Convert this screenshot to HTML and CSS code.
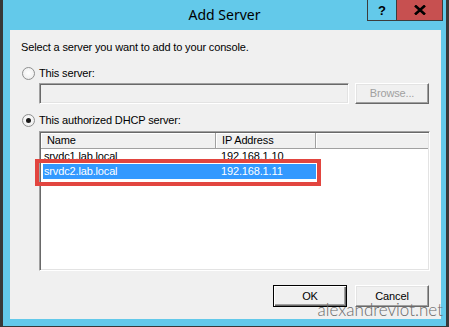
FILE: index.html
```html
<!DOCTYPE html>
<html>
<head>
<meta charset="utf-8">
<link rel="stylesheet" href="styles.css">
</head>
<body>
<div class="window">
  <div class="titlebar">
    <div class="title">Add Server</div>
    <div class="caption-buttons">
      <div class="cap-btn help">?</div>
      <div class="cap-btn close">
        <svg width="12" height="10" viewBox="0 0 12 10"><path d="M1 0.5 L11 9.5 M11 0.5 L1 9.5" stroke="#000" stroke-width="2.6" fill="none"/></svg>
      </div>
    </div>
  </div>
  <div class="client">
    <div class="intro">Select a server you want to add to your console.</div>
    <div class="radio-row r1"><span class="radio"></span><span class="label">This server:</span></div>
    <div class="server-row">
      <div class="textbox"></div>
      <div class="btn disabled browse">Browse...</div>
    </div>
    <div class="radio-row r2"><span class="radio checked"></span><span class="label">This authorized DHCP server:</span></div>
    <div class="list-wrap">
      <div class="list">
        <div class="header">
          <div class="col c-name">Name</div>
          <div class="col c-ip">IP Address</div>
          <div class="col c-rest"></div>
        </div>
        <div class="row"><div class="cell c-name">srvdc1.lab.local</div><div class="cell c-ip">192.168.1.10</div></div>
        <div class="row selected"><div class="cell c-name">srvdc2.lab.local</div><div class="cell c-ip">192.168.1.11</div></div>
      </div>
      <div class="highlight-box"></div>
    </div>
    <div class="actions">
      <div class="btn default">OK</div>
      <div class="btn">Cancel</div>
    </div>
  </div>
  <div class="watermark">alexandreviot.net</div>
</div>
</body>
</html>
```

FILE: styles.css
```css
html, body {
  margin: 0;
  padding: 0;
  width: 449px;
  height: 327px;
  overflow: hidden;
}
body {
  font-family: "Liberation Sans", Arial, sans-serif;
  font-size: 11px;
  letter-spacing: -0.15px;
  color: #000;
}
.window {
  position: relative;
  box-sizing: border-box;
  width: 449px;
  height: 327px;
  background: #63c9ea;
  border-left: 3px solid #383838;
  border-right: 3px solid #383838;
  border-bottom: 1px solid #383838;
  padding: 0 5px 7px 7px;
  display: flex;
  flex-direction: column;
}
.titlebar {
  height: 30px;
  display: grid;
  grid-template-columns: 1fr auto 1fr;
  margin: 0 -5px 0 -7px;
}
.title {
  grid-column: 2;
  font-family: "Noto Sans", "Open Sans", sans-serif;
  font-size: 14px;
  letter-spacing: 0;
  line-height: 30px;
  color: #000;
}
.caption-buttons {
  grid-column: 3;
  justify-self: end;
  display: flex;
  height: 21px;
  margin-right: 3px;
}
.cap-btn {
  box-sizing: border-box;
  height: 21px;
  border: 1px solid #3c3c3c;
  border-top: none;
  display: flex;
  align-items: center;
  justify-content: center;
}
.help {
  width: 30px;
  background: #63c9ea;
  font-weight: bold;
  font-size: 13px;
  padding-top: 1px;
}
.close {
  width: 46px;
  background: #c75050;
  border-left: none;
}
.client {
  flex: 1;
  background: #f0f0f0;
  padding: 11px 11px 0 12px;
  display: flex;
  flex-direction: column;
}
.intro {
  line-height: 13px;
  margin-left: -1px;
}
.radio-row {
  display: flex;
  align-items: center;
  height: 13px;
  line-height: 13px;
}
.r1 { margin-top: 13px; }
.r2 { margin-top: 10px; }
.radio {
  box-sizing: border-box;
  width: 13px;
  height: 13px;
  border-radius: 50%;
  border: 1px solid #8e8f8f;
  background: radial-gradient(circle at 50% 45%, #ffffff 0%, #f2f2f2 60%, #e0e0e0 100%);
  margin-right: 4px;
  position: relative;
}
.radio.checked::after {
  content: "";
  position: absolute;
  left: 3px;
  top: 3px;
  width: 5px;
  height: 5px;
  border-radius: 50%;
  background: #1a1a1a;
}
.server-row {
  display: flex;
  margin-top: 3px;
  margin-left: 17px;
  gap: 6px;
}
.textbox {
  box-sizing: border-box;
  width: 310px;
  height: 21px;
  border: 1px solid;
  border-color: #a0a0a0 #ffffff #ffffff #a0a0a0;
  box-shadow: inset 1px 1px 0 #696969, inset -1px -1px 0 #e3e3e3;
  background: #f0f0f0;
}
.btn {
  box-sizing: border-box;
  width: 74px;
  height: 22px;
  border: 1px solid;
  border-color: #ffffff #696969 #696969 #ffffff;
  box-shadow: inset -1px -1px 0 #a0a0a0, inset 1px 1px 0 #e3e3e3;
  background: #f0f0f0;
  display: flex;
  align-items: center;
  justify-content: center;
  line-height: 13px;
}
.browse {
  height: 21px;
}
.btn.disabled {
  color: #a0a0a0;
}
.btn.default {
  border: 1px solid #000;
  box-shadow: inset 1px 1px 0 #ffffff, inset -1px -1px 0 #696969, inset -2px -2px 0 #a0a0a0;
}
.list-wrap {
  position: relative;
  margin-top: 4px;
  margin-left: 17px;
}
.list {
  box-sizing: border-box;
  width: 391px;
  height: 140px;
  border: 1px solid;
  border-color: #a0a0a0 #ffffff #ffffff #a0a0a0;
  box-shadow: inset 1px 1px 0 #696969, inset -1px -1px 0 #e3e3e3;
  background: #ffffff;
  padding: 1px;
  overflow: hidden;
}
.header {
  display: flex;
  height: 16px;
  line-height: 15px;
}
.col {
  box-sizing: border-box;
  height: 16px;
  background: #f0f0f0;
  border-right: 1px solid #a0a0a0;
  border-bottom: 1px solid #a0a0a0;
  box-shadow: inset 1px 1px 0 #ffffff;
  padding-left: 6px;
}
.c-name { width: 175px; }
.c-ip { width: 100px; }
.c-rest { flex: 1; border-right: none; }
.row {
  display: flex;
  height: 15px;
  line-height: 15px;
  margin-left: 2px;
  width: 273px;
}
.row .cell { padding-left: 1px; box-sizing: border-box; }
.row .c-name { width: 173px; }
.row .c-ip { width: 100px; padding-left: 5px; }
.row.selected {
  background: #3399ff;
  color: #ffffff;
}
.highlight-box {
  position: absolute;
  left: -4px;
  top: 28px;
  width: 286px;
  height: 27px;
  box-sizing: border-box;
  border: 4px solid #e2453f;
}
.actions {
  display: flex;
  justify-content: flex-end;
  gap: 8px;
  margin-top: 14px;
  margin-right: 1px;
}
.watermark {
  position: absolute;
  right: 3px;
  bottom: 8px;
  font-family: "Lato", "Noto Sans", sans-serif;
  font-weight: 300;
  font-size: 17px;
  letter-spacing: 0;
  line-height: 16px;
  color: #6a6a6a;
}
```
